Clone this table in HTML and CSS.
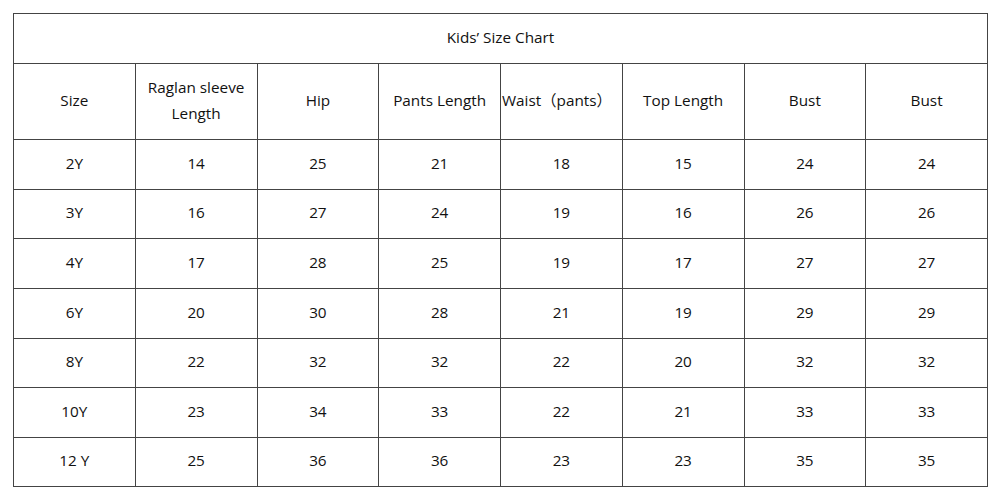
FILE: index.html
```html
<!DOCTYPE html>
<html>
<head>
<meta charset="utf-8">
<link rel="stylesheet" href="styles.css">
</head>
<body>
<table class="chart">
  <colgroup>
    <col><col><col><col><col><col><col><col>
  </colgroup>
  <tr class="title-row"><td colspan="8">Kids’ Size Chart</td></tr>
  <tr class="head-row">
    <td>Size</td>
    <td>Raglan sleeve<br>Length</td>
    <td>Hip</td>
    <td>Pants Length</td>
    <td class="waist">Waist（pants）</td>
    <td>Top Length</td>
    <td>Bust</td>
    <td>Bust</td>
  </tr>
  <tr class="r50"><td>2Y</td><td>14</td><td>25</td><td>21</td><td>18</td><td>15</td><td>24</td><td>24</td></tr>
  <tr class="r49"><td>3Y</td><td>16</td><td>27</td><td>24</td><td>19</td><td>16</td><td>26</td><td>26</td></tr>
  <tr class="r50"><td>4Y</td><td>17</td><td>28</td><td>25</td><td>19</td><td>17</td><td>27</td><td>27</td></tr>
  <tr class="r50"><td>6Y</td><td>20</td><td>30</td><td>28</td><td>21</td><td>19</td><td>29</td><td>29</td></tr>
  <tr class="r49"><td>8Y</td><td>22</td><td>32</td><td>32</td><td>22</td><td>20</td><td>32</td><td>32</td></tr>
  <tr class="r50"><td>10Y</td><td>23</td><td>34</td><td>33</td><td>22</td><td>21</td><td>33</td><td>33</td></tr>
  <tr class="r49"><td>12 Y</td><td>25</td><td>36</td><td>36</td><td>23</td><td>23</td><td>35</td><td>35</td></tr>
</table>
</body>
</html>
```
FILE: styles.css
```css
html, body {
  margin: 0;
  padding: 0;
  background: #ffffff;
}
body {
  padding: 13px 0 0 13px;
  font-family: "Open Sans", "Noto Sans CJK SC", sans-serif;
  font-size: 15.3px;
  color: #111;
}
.chart {
  border-collapse: collapse;
  table-layout: fixed;
  width: 975px;
}
.chart td {
  border: 1px solid #444;
  text-align: center;
  vertical-align: middle;
  padding: 0 0 4px 0;
  line-height: 26px;
  white-space: nowrap;
  overflow: visible;
}
.title-row td { height: 45px; }
.head-row td { height: 71px; }
.r50 td { height: 45px; }
.r49 td { height: 44px; }
.chart td.waist {
  text-align: left;
  padding-left: 1px;
}
```
